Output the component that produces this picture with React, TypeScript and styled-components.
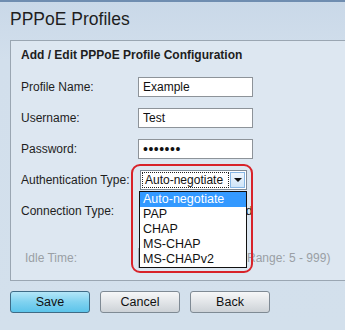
import React from "react";
import styled, { createGlobalStyle } from "styled-components";

const GlobalStyle = createGlobalStyle`
  html, body {
    margin: 0;
    padding: 0;
  }
  body {
    width: 345px;
    height: 330px;
    overflow: hidden;
    background: linear-gradient(#c9d8e8, #d2dfec 60px, #d3e0ec);
    font-family: Arial, "Liberation Sans", sans-serif;
    color: #1e1e1e;
  }
`;

const Page = styled.div`
  border-top: 2px solid #6f8db0;
  height: 328px;
`;

const Title = styled.h1`
  margin: 0;
  padding: 7px 0 0 10px;
  height: 24px;
  font-size: 17.5px;
  line-height: 20px;
  font-weight: normal;
  color: #1e1e1e;
`;

const Panel = styled.div`
  margin: 7px 0 0 10px;
  width: 335px;
  box-sizing: border-box;
  padding: 7px 0 12px 10px;
  background: #dde7f1;
  border: 1px solid #9aa6b2;
  border-right: none;
`;

const PanelHeader = styled.div`
  font-size: 12px;
  line-height: 14px;
  font-weight: bold;
  margin-bottom: 15px;
`;

const Form = styled.div`
  display: flex;
  flex-direction: column;
`;

const Row = styled.div<{ $gap?: number }>`
  display: flex;
  align-items: center;
  height: 20px;
  margin-bottom: ${(p) => p.$gap ?? 11}px;
`;

const Label = styled.label<{ $disabled?: boolean }>`
  width: ${(p) => (p.$disabled ? 113 : 117)}px;
  padding-left: ${(p) => (p.$disabled ? 4 : 0)}px;
  font-size: 12px;
  line-height: 14px;
  color: ${(p) => (p.$disabled ? "#9a9fa5" : "#1e1e1e")};
`;

const TextInput = styled.input<{ $w?: number }>`
  box-sizing: border-box;
  width: ${(p) => p.$w ?? 115}px;
  height: 20px;
  margin: 0;
  padding: 0 4px;
  border: 1px solid #8d9399;
  background: #fff;
  font-family: Arial, "Liberation Sans", sans-serif;
  font-size: 12px;
  color: #111;
  outline: none;
  &[type="password"] {
    font-size: 14px;
    letter-spacing: 0.5px;
  }
  &:disabled {
    background: #dde7f1;
    border-color: #a8b0b8;
  }
`;

const SelectWrap = styled.div`
  position: relative;
  margin-left: 2px;
`;

const SelectBox = styled.div`
  box-sizing: border-box;
  width: 107px;
  height: 20px;
  display: flex;
  align-items: stretch;
  background: #fff;
  border: 1px solid #7e8a96;
  padding: 1px;
`;

const SelectValue = styled.div`
  flex: 1;
  border: 1px dotted #222;
  font-size: 12px;
  line-height: 14px;
  padding-left: 2px;
  color: #111;
`;

const ArrowButton = styled.div`
  width: 15px;
  margin-left: 1px;
  box-sizing: border-box;
  border: 1px solid #86b6e4;
  background: linear-gradient(#eef6fd, #cfe5f8);
  display: flex;
  align-items: center;
  justify-content: center;
`;

const Arrow = styled.div`
  width: 0;
  height: 0;
  border-left: 4px solid transparent;
  border-right: 4px solid transparent;
  border-top: 4px solid #111;
`;

const DropList = styled.ul`
  position: absolute;
  left: -1px;
  top: 21px;
  width: 108px;
  margin: 0;
  padding: 0;
  list-style: none;
  box-sizing: border-box;
  background: #fff;
  border: 1px solid #111;
  z-index: 2;
`;

const DropItem = styled.li<{ $active?: boolean }>`
  height: 15px;
  font-size: 12.5px;
  line-height: 15px;
  padding-left: 3px;
  color: ${(p) => (p.$active ? "#fff" : "#111")};
  background: ${(p) => (p.$active ? "#3399ff" : "transparent")};
`;

const Highlight = styled.div`
  position: absolute;
  left: -9px;
  top: -6px;
  width: 122px;
  height: 109px;
  box-sizing: border-box;
  border: 2px solid #d8232a;
  border-radius: 9px;
  z-index: 3;
  pointer-events: none;
`;

const RadioText = styled.span`
  display: flex;
  align-items: center;
  gap: 7px;
  margin-left: 5px;
  font-size: 12px;
`;

const Radio = styled.span`
  width: 11px;
  height: 11px;
  border-radius: 50%;
  border: 1px solid #777;
  background: #fff;
`;

const Hint = styled.span`
  margin-left: 56px;
  font-size: 12px;
  color: #9a9fa5;
`;

const ButtonBar = styled.div`
  display: flex;
  gap: 10px;
  padding: 10px 0 0 10px;
`;

const Button = styled.button<{ $primary?: boolean }>`
  box-sizing: border-box;
  width: 80px;
  height: 22px;
  margin: 0;
  padding: 0;
  border-radius: 3px;
  border: 1px solid ${(p) => (p.$primary ? "#3f6b86" : "#7f8a94")};
  background: ${(p) =>
    p.$primary
      ? "linear-gradient(#b4e6f8, #7fd2f0 50%, #5cc4ea)"
      : "linear-gradient(#f6f7f8, #e2e5e8 50%, #cdd2d7)"};
  font-family: Arial, "Liberation Sans", sans-serif;
  font-size: 12.5px;
  color: #111;
`;

const options = ["Auto-negotiate", "PAP", "CHAP", "MS-CHAP", "MS-CHAPv2"];

export default function App() {
  return (
    <Page>
      <GlobalStyle />
      <Title>PPPoE Profiles</Title>
      <Panel>
        <PanelHeader>Add / Edit PPPoE Profile Configuration</PanelHeader>
        <Form>
          <Row>
            <Label>Profile Name:</Label>
            <TextInput defaultValue="Example" />
          </Row>
          <Row>
            <Label>Username:</Label>
            <TextInput defaultValue="Test" />
          </Row>
          <Row>
            <Label>Password:</Label>
            <TextInput type="password" defaultValue="1234567" />
          </Row>
          <Row $gap={11}>
            <Label>Authentication Type:</Label>
            <SelectWrap>
              <SelectBox>
                <SelectValue>Auto-negotiate</SelectValue>
                <ArrowButton>
                  <Arrow />
                </ArrowButton>
              </SelectBox>
              <DropList>
                {options.map((o, i) => (
                  <DropItem key={o} $active={i === 0}>
                    {o}
                  </DropItem>
                ))}
              </DropList>
              <Highlight />
            </SelectWrap>
          </Row>
          <Row $gap={27}>
            <Label>Connection Type:</Label>
            <RadioText>
              <Radio />
              Keep Connected
            </RadioText>
          </Row>
          <Row $gap={0}>
            <Label $disabled>Idle Time:</Label>
            <TextInput $w={49} disabled />
            <Hint>(Range: 5 - 999)</Hint>
          </Row>
        </Form>
      </Panel>
      <ButtonBar>
        <Button $primary>Save</Button>
        <Button>Cancel</Button>
        <Button>Back</Button>
      </ButtonBar>
    </Page>
  );
}
